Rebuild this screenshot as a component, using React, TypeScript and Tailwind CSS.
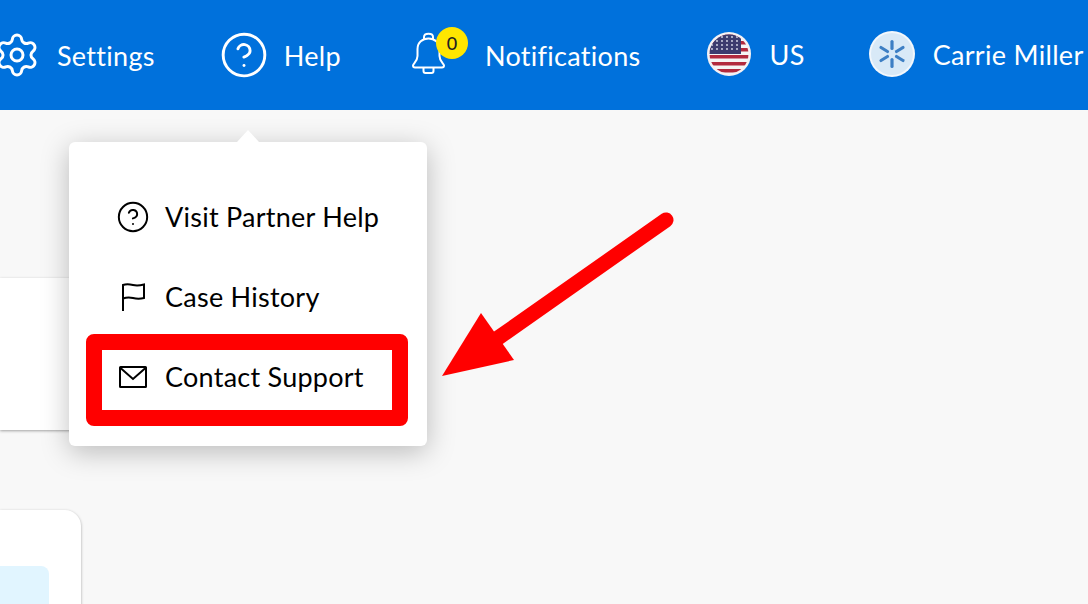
import { CircleHelp, Settings } from "lucide-react";

function Bell() {
  return (
    <svg width="38" height="46" viewBox="0 0 38 46" fill="none" stroke="white" strokeWidth="2" strokeLinejoin="round" className="shrink-0">
      <path d="M15 7.500V5C15 0.500 24 0.500 24 5V7.500" />
      <path d="M4 33.500C4 31.500 8.500 29.500 8.500 24V17C8.500 10.500 13.500 6.500 19.500 6.500C25.500 6.500 30.500 10.500 30.500 17V24C30.500 29.500 35 31.500 35 33.500C35 34.800 34 35.500 33 35.500H6C5 35.500 4 34.800 4 33.500Z" />
      <path d="M14.500 35.500V39C14.500 40.300 15.200 41 16.500 41H22.500C23.800 41 24.500 40.300 24.500 39V35.500" />
    </svg>
  );
}

function UsFlag() {
  return (
    <svg width="44" height="44" viewBox="0 0 44 44" className="shrink-0">
      <defs>
        <clipPath id="flag-circle">
          <circle cx="22" cy="22" r="19.500" />
        </clipPath>
      </defs>
      <circle cx="22" cy="22" r="22" fill="#f4f1f4" />
      <g clipPath="url(#flag-circle)">
        <rect x="0" y="0" width="44" height="44" fill="#f5f5f5" />
        <rect x="0" y="2" width="44" height="3.500" fill="#b22a3e" />
        <rect x="0" y="9" width="44" height="3.500" fill="#b22a3e" />
        <rect x="0" y="16" width="44" height="3.500" fill="#b22a3e" />
        <rect x="0" y="23" width="44" height="3.500" fill="#b22a3e" />
        <rect x="0" y="30" width="44" height="3.500" fill="#b22a3e" />
        <rect x="0" y="37" width="44" height="3.500" fill="#b22a3e" />
        <rect x="0" y="0" width="34" height="22" fill="#3c3b6e" />
        {[5, 9, 13, 17].map((y) =>
          [5, 10, 15, 20, 25, 30].map((x) => (
            <circle key={`${x}-${y}`} cx={x} cy={y} r="0.900" fill="#dfe0ee" />
          ))
        )}
      </g>
    </svg>
  );
}

function Spark() {
  return (
    <svg width="46" height="46" viewBox="0 0 46 46" className="shrink-0">
      <circle cx="23" cy="23" r="23" fill="#f2f7fc" />
      <circle cx="23" cy="23" r="21" fill="#d8e9f7" />
      <g stroke="#3d7fc4" strokeWidth="3.200" strokeLinecap="round">
        <path d="M23 10.500V17.500" />
        <path d="M23 28.500V35.500" />
        <path d="M12 16.500L18.500 20.500" />
        <path d="M27.500 25.500L34 29.500" />
        <path d="M12 29.500L18.500 25.500" />
        <path d="M27.500 20.500L34 16.500" />
      </g>
    </svg>
  );
}

function MenuRow({ icon, label }: { icon: React.ReactNode; label: string }) {
  return (
    <div className="flex h-20 items-center pl-[50px]">
      <span className="flex w-[28px] justify-center">{icon}</span>
      <span className="-mt-[2px] ml-[18px] text-[27px] leading-none tracking-[0.25px] text-black">{label}</span>
    </div>
  );
}

export default function App() {
  const navText = "text-[27px] leading-none tracking-[0.3px] text-white";
  return (
    <div className="relative h-[604px] w-[1088px] overflow-hidden bg-[#f8f8f8] font-['Lato','Noto_Sans',sans-serif]">
      <header className="flex h-[110px] items-center whitespace-nowrap bg-[#0071dc]">
        <div className="-ml-[7px] flex items-center gap-[16px]">
          <Settings size={48} color="white" strokeWidth={1.500} />
          <span className={navText}>Settings</span>
        </div>
        <div className="ml-[64px] flex items-center gap-[15px]">
          <CircleHelp size={50} color="white" strokeWidth={1.400} />
          <span className={navText}>Help</span>
        </div>
        <div className="relative ml-[68px] flex items-center gap-[38px]">
          <Bell />
          <span className={navText}>Notifications</span>
          <span className="absolute left-[27px] top-[-5px] flex h-[32px] w-[32px] items-center justify-center rounded-full bg-[#ffe600] text-[18px] font-medium text-[#222]">
            0
          </span>
        </div>
        <div className="ml-[66px] -mt-[2px] flex items-center gap-[19px]">
          <UsFlag />
          <span className={navText}>US</span>
        </div>
        <div className="ml-[64px] -mt-[2px] flex items-center gap-[18px]">
          <Spark />
          <span className={navText}>Carrie Miller</span>
        </div>
      </header>

      <main className="flex flex-col items-start">
        <section className="mt-[168px] h-[152px] w-[300px] rounded-r-[10px] bg-white shadow-[0_1px_3px_rgba(0,0,0,0.35)]" />
        <section className="mt-[80px] h-[200px] w-[81px] rounded-tr-[16px] bg-white pt-[56px] shadow-[0_1px_3px_rgba(0,0,0,0.35)]">
          <div className="h-[60px] w-[49px] rounded-tr-[8px] bg-[#e1f5ff]" />
        </section>
      </main>

      {/* help dropdown */}
      <div className="absolute left-[69px] top-[142px] h-[304px] w-[358px] rounded-[6px] bg-white pt-[35px] shadow-[0_6px_28px_rgba(0,0,0,0.25)]">
        <div className="absolute left-[168px] top-[-12px] h-0 w-0 border-x-[11px] border-b-[12px] border-x-transparent border-b-white" />
        <MenuRow
          label="Visit Partner Help"
          icon={<CircleHelp size={34} color="black" strokeWidth={1.400} className="shrink-0" />}
        />
        <MenuRow
          label="Case History"
          icon={
            <svg width="26" height="30" viewBox="0 0 26 30" fill="none" stroke="black" strokeWidth="2" className="shrink-0">
              <path d="M3 29V3C7 1.500 9 2 13 3C17 4 20 3.500 24 2.500V16C20 17 17 17 13 16C9 15 7 15 3 16.500" />
            </svg>
          }
        />
        <MenuRow
          label="Contact Support"
          icon={
            <svg width="28" height="22" viewBox="0 0 28 22" fill="none" stroke="black" strokeWidth="2" className="shrink-0">
              <rect x="1" y="1" width="26" height="20" rx="0.500" />
              <path d="M1.500 2L14 13L26.500 2" />
            </svg>
          }
        />
        <div className="absolute left-[17px] top-[192px] h-[92px] w-[322px] rounded-[8px] border-[16px] border-[#ff0000]" />
      </div>

      {/* annotation arrow */}
      <svg className="absolute left-[430px] top-[200px]" width="260" height="190" viewBox="0 0 260 190" fill="#ff0000">
        <path d="M236 20L68 138" stroke="#ff0000" strokeWidth="15" strokeLinecap="round" />
        <path d="M12 176L51 113L84 160Z" />
      </svg>
    </div>
  );
}
